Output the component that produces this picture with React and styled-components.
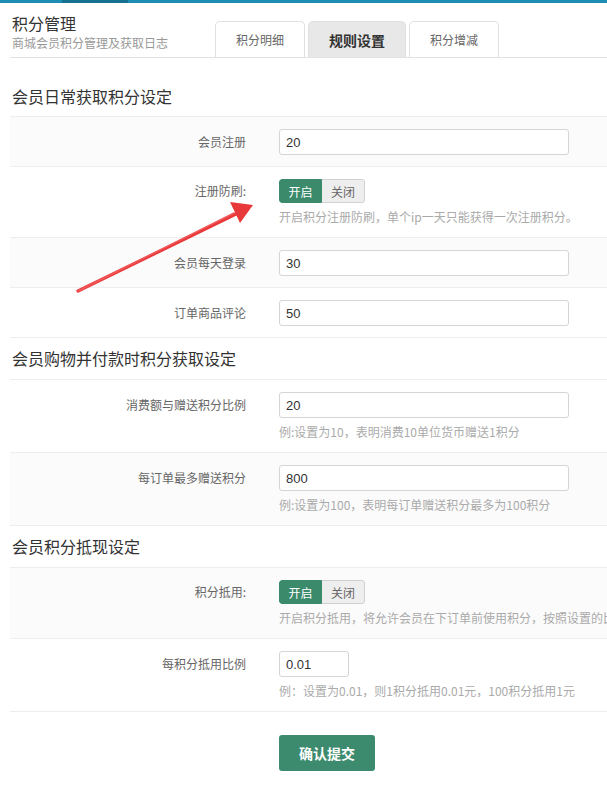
import React from "react";
import styled, { createGlobalStyle } from "styled-components";

const Global = createGlobalStyle`
  html, body { margin: 0; padding: 0; background: #fff; }
  body {
    font-family: "Noto Sans CJK SC", "Noto Sans", "Liberation Sans", sans-serif;
    color: #333;
    overflow: hidden;
    width: 607px;
  }
  * { box-sizing: border-box; }
`;

const Page = styled.div`
  position: relative;
  width: 607px;
  min-height: 787px;
  overflow: hidden;
`;

const TopBar = styled.div`
  height: 3px;
  background: linear-gradient(to right, #1e8db3 0, #1e8db3 62px, #16708f 62px, #16708f 128px, #1e8db3 128px);
`;

const Header = styled.div`
  display: flex;
  align-items: flex-end;
  margin-left: 10px;
  width: 800px;
  padding-left: 2px;
  border-bottom: 1px solid #e2e2e2;
  height: 55px;
`;

const TitleBlock = styled.div`
  width: 203px;
  align-self: flex-start;
  padding-top: 9px;
`;

const Title = styled.div`
  font-size: 16px;
  line-height: 22px;
  color: #333;
`;

const Subtitle = styled.div`
  font-size: 12px;
  line-height: 18px;
  color: #999;
`;

const Tabs = styled.div`
  display: flex;
  gap: 3px;
`;

const Tab = styled.div`
  height: 36px;
  padding: 0 20px;
  display: flex;
  align-items: center;
  border: 1px solid #e0e0e0;
  border-bottom: none;
  border-radius: 5px 5px 0 0;
  background: ${(p) => (p.$active ? "#e8e8e8" : "#fff")};
  color: ${(p) => (p.$active ? "#333" : "#666")};
  font-size: ${(p) => (p.$active ? "14px" : "12px")};
  font-weight: ${(p) => (p.$active ? 700 : 400)};
`;

const Form = styled.div`
  margin-left: 10px;
  width: 800px;
`;

const SectionTitle = styled.div`
  font-size: 16px;
  line-height: 21px;
  padding: ${(p) => (p.$first ? "28px 2px 9px" : "10px 2px 10px")};
  border-bottom: 1px solid #eee;
  color: #333;
`;

const Row = styled.div`
  display: grid;
  grid-template-columns: 236px 1fr;
  column-gap: 33px;
  padding: ${(p) => (p.$help ? "12px 0 11px" : "12px 0 11px")};
  border-bottom: 1px solid #eee;
  background: ${(p) => (p.$gray ? "#fbfbfb" : "#fff")};
`;

const Label = styled.div`
  text-align: right;
  font-size: 12px;
  color: #666;
  height: ${(p) => (p.$h ? p.$h : 26)}px;
  line-height: ${(p) => (p.$h ? p.$h : 26)}px;
`;

const Control = styled.div`
  display: flex;
  flex-direction: column;
  align-items: flex-start;
`;

const Input = styled.input`
  width: ${(p) => p.$w || 290}px;
  height: 26px;
  border: 1px solid #d5d5d5;
  border-radius: 3px;
  padding: 0 6px;
  font-family: "Liberation Sans", "Noto Sans CJK SC", sans-serif;
  font-size: 13px;
  color: #333;
  background: #fff;
  outline: none;
`;

const Help = styled.div`
  font-size: 12px;
  color: #aaa;
  line-height: 18px;
  margin-top: ${(p) => (p.$tight ? 3 : 5)}px;
  white-space: nowrap;
`;

const Toggle = styled.div`
  display: flex;
  height: 24px;
  border-radius: 3px;
  overflow: hidden;
  margin-bottom: 2px;
`;

const ToggleBtn = styled.div`
  width: 43px;
  display: flex;
  align-items: center;
  justify-content: center;
  font-size: 12px;
  background: ${(p) => (p.$on ? "#3b8a6c" : "#eeeeee")};
  color: ${(p) => (p.$on ? "#fff" : "#666")};
  border: 1px solid ${(p) => (p.$on ? "#3b8a6c" : "#d0d0d0")};
  border-left: ${(p) => (p.$on ? "1px solid #3b8a6c" : "none")};
  border-radius: ${(p) => (p.$on ? "3px 0 0 3px" : "0 3px 3px 0")};
`;

const Actions = styled.div`
  display: grid;
  grid-template-columns: 236px 1fr;
  column-gap: 33px;
  margin-left: 10px;
  padding-top: 23px;
`;

const Submit = styled.button`
  grid-column: 2;
  width: 96px;
  height: 36px;
  border: none;
  border-radius: 3px;
  background: #3d8b6e;
  color: #fff;
  font-family: "Noto Sans CJK SC", sans-serif;
  font-size: 14px;
  font-weight: 700;
`;

const Arrow = styled.svg`
  position: absolute;
  left: 0;
  top: 0;
  pointer-events: none;
`;

const Switch = () => (
  <Toggle>
    <ToggleBtn $on>开启</ToggleBtn>
    <ToggleBtn>关闭</ToggleBtn>
  </Toggle>
);

export default function App() {
  return (
    <Page>
      <Global />
      <TopBar />
      <Header>
        <TitleBlock>
          <Title>积分管理</Title>
          <Subtitle>商城会员积分管理及获取日志</Subtitle>
        </TitleBlock>
        <Tabs>
          <Tab>积分明细</Tab>
          <Tab $active>规则设置</Tab>
          <Tab>积分增减</Tab>
        </Tabs>
      </Header>
      <Form>
        <SectionTitle $first>会员日常获取积分设定</SectionTitle>
        <Row $gray>
          <Label>会员注册</Label>
          <Control><Input defaultValue="20" /></Control>
        </Row>
        <Row $help>
          <Label $h={24}>注册防刷:</Label>
          <Control>
            <Switch />
            <Help $tight>开启积分注册防刷，单个ip一天只能获得一次注册积分。</Help>
          </Control>
        </Row>
        <Row $gray>
          <Label>会员每天登录</Label>
          <Control><Input defaultValue="30" /></Control>
        </Row>
        <Row>
          <Label>订单商品评论</Label>
          <Control><Input defaultValue="50" /></Control>
        </Row>
        <SectionTitle>会员购物并付款时积分获取设定</SectionTitle>
        <Row $help>
          <Label>消费额与赠送积分比例</Label>
          <Control>
            <Input defaultValue="20" />
            <Help>例:设置为10，表明消费10单位货币赠送1积分</Help>
          </Control>
        </Row>
        <Row $help $gray>
          <Label>每订单最多赠送积分</Label>
          <Control>
            <Input defaultValue="800" />
            <Help>例:设置为100，表明每订单赠送积分最多为100积分</Help>
          </Control>
        </Row>
        <SectionTitle>会员积分抵现设定</SectionTitle>
        <Row $help $gray>
          <Label $h={24}>积分抵用:</Label>
          <Control>
            <Switch />
            <Help $tight>开启积分抵用，将允许会员在下订单前使用积分，按照设置的比例抵扣现金</Help>
          </Control>
        </Row>
        <Row $help>
          <Label>每积分抵用比例</Label>
          <Control>
            <Input $w={70} defaultValue="0.01" />
            <Help>例：设置为0.01，则1积分抵用0.01元，100积分抵用1元</Help>
          </Control>
        </Row>
      </Form>
      <Actions>
        <Submit>确认提交</Submit>
      </Actions>
      <Arrow width="607" height="787" viewBox="0 0 607 787">
        <path d="M78 291 L236 214" stroke="#e8383a" strokeWidth="3.2" strokeLinecap="round" fill="none" />
        <path d="M78 291 L234 213" stroke="#f05a5a" strokeWidth="1.4" strokeLinecap="round" fill="none" />
        <polygon points="253,205 230,202 240,223" fill="#e8383a" />
      </Arrow>
    </Page>
  );
}
